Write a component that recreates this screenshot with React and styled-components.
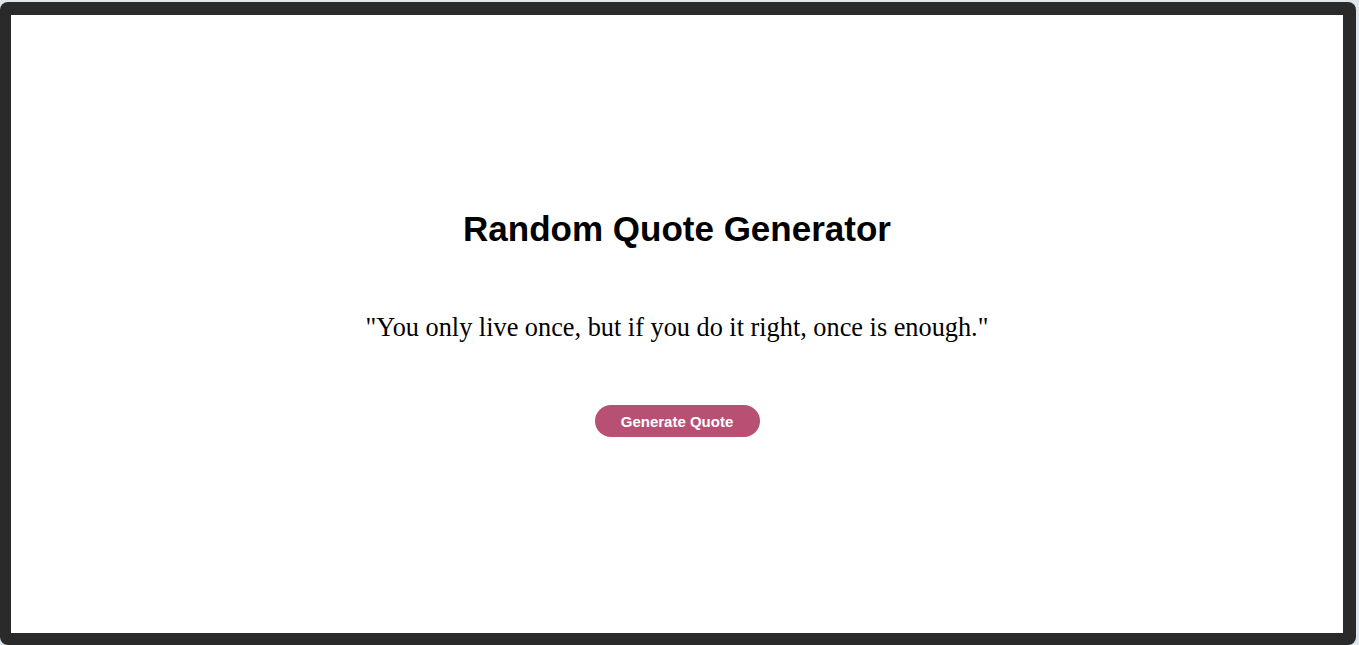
import React, {useState} from 'react'
import styled, {createGlobalStyle} from 'styled-components'

const Global = createGlobalStyle`
  html, body {
    margin: 0;
    padding: 0;
    background: #dfe6ec;
  }
`

const Frame = styled.div`
  margin-top: 2px;
  width: 1356px;
  height: 643px;
  box-sizing: border-box;
  background: #2a2a2a;
  border-radius: 8px;
  padding: 13px 13px 12px 11px;
  display: flex;
`

const Screen = styled.main`
  flex: 1;
  background: #fff;
  display: flex;
  flex-direction: column;
  align-items: center;
  justify-content: center;
  padding-bottom: 2px;
`

const Title = styled.h1`
  margin: 0;
  font-family: "Liberation Sans", Arial, sans-serif;
  font-size: 35px;
  font-weight: bold;
  color: #000;
`

const Quote = styled.p`
  margin: 64px 0 62px;
  font-family: "Liberation Serif", "Times New Roman", serif;
  font-size: 26.3px;
  color: #000;
`

const Button = styled.button`
  width: 165px;
  height: 32px;
  border: none;
  border-radius: 16px;
  background: #b85074;
  color: #fff;
  font-family: "Liberation Sans", Arial, sans-serif;
  font-size: 15px;
  font-weight: bold;
  cursor: pointer;
`

const quotes = [
  '"You only live once, but if you do it right, once is enough."',
  '"Be yourself; everyone else is already taken."',
  '"So many books, so little time."',
]

const App = () => {
  const [i, setI] = useState(0)
  return (
    <>
      <Global />
      <Frame>
        <Screen>
          <Title>Random Quote Generator</Title>
          <Quote>{quotes[i]}</Quote>
          <Button onClick={() => setI((i + 1) % quotes.length)}>Generate Quote</Button>
        </Screen>
      </Frame>
    </>
  )
}

export default App
